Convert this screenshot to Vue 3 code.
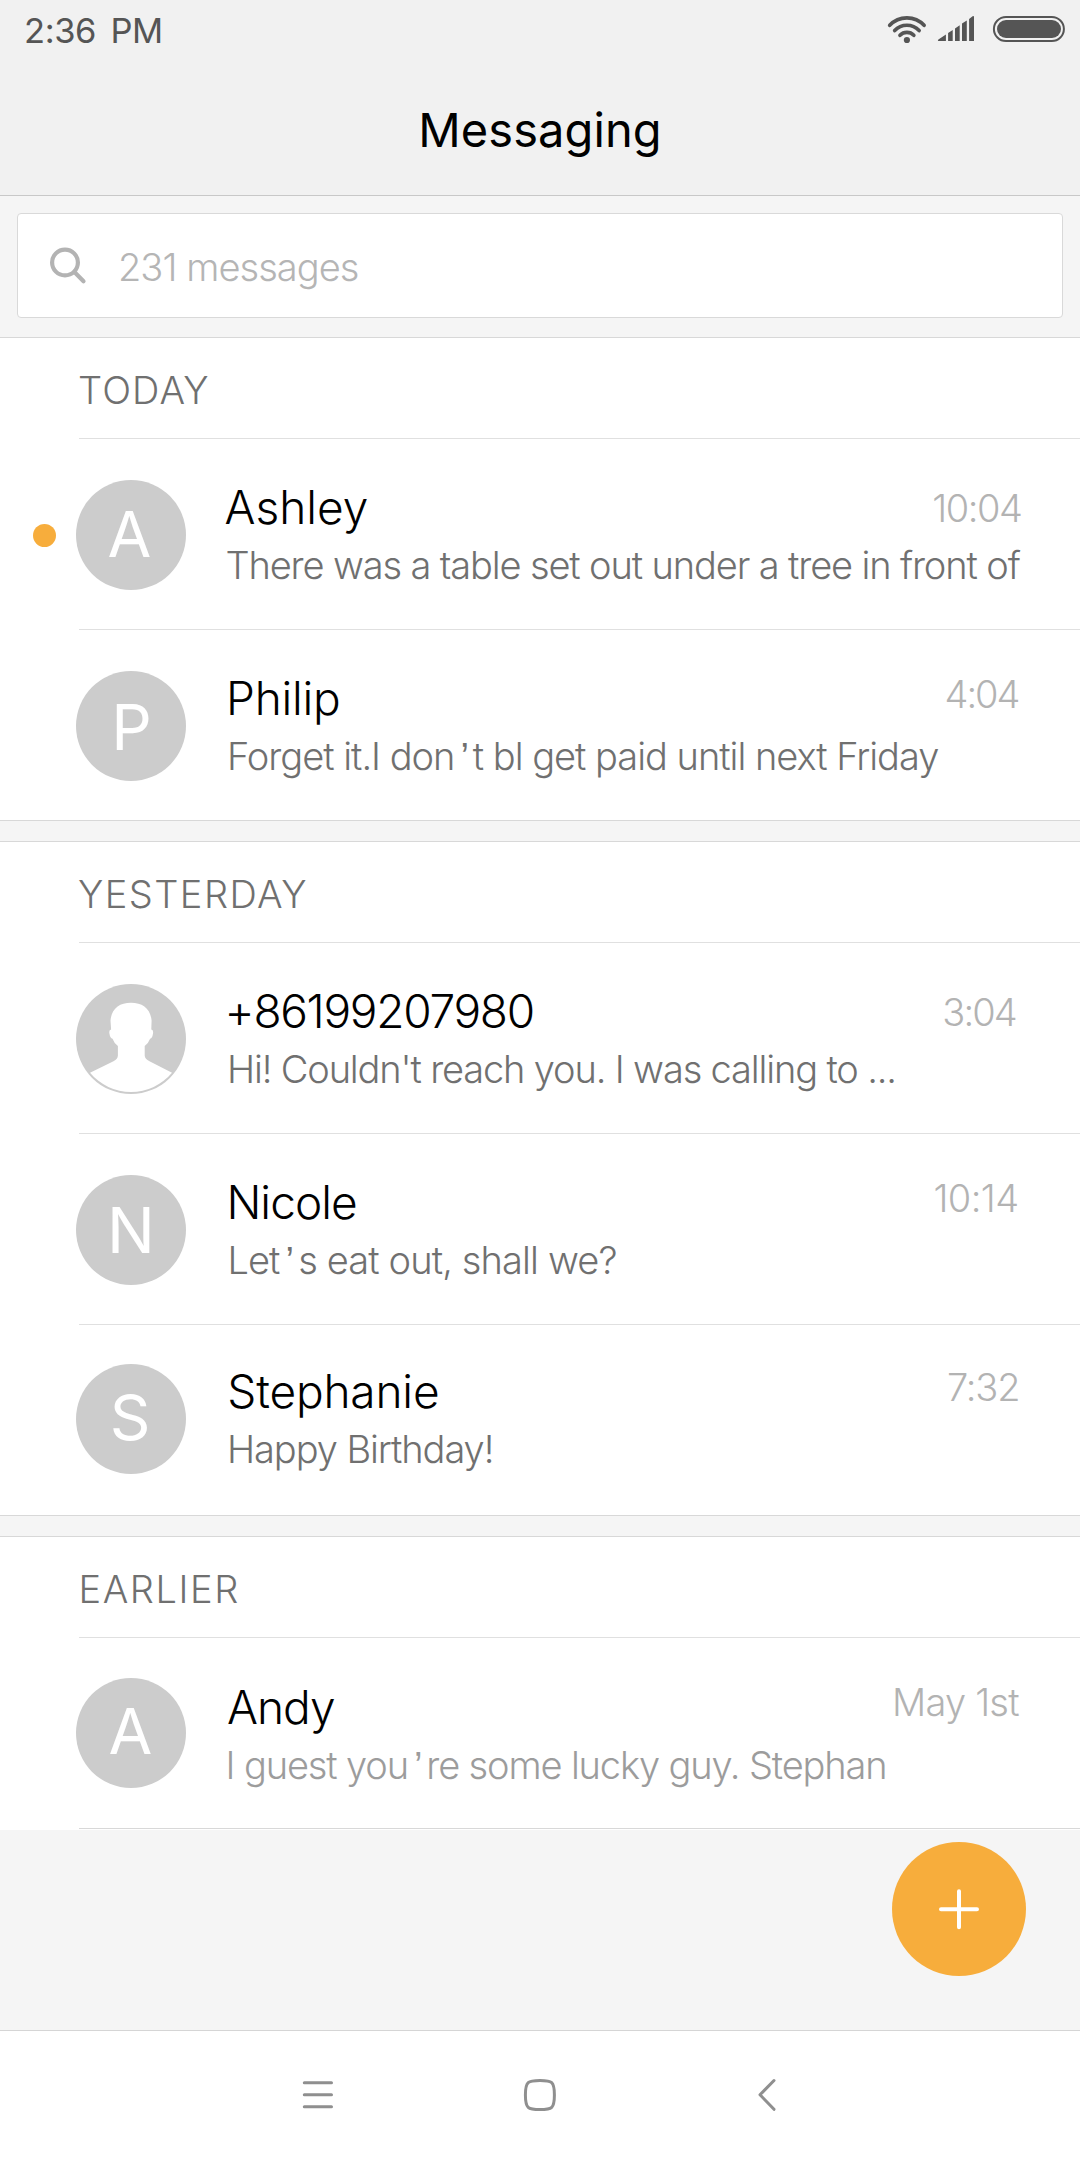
<script setup>
// Optical adjustments (tracking and nudges, in px) sit beside each string.
const sections = [
  {
    label: 'TODAY', track: 1.1, indent: 78,
    threads: [
      { initial: 'A', ix: -1.5, iy: -1, name: 'Ashley', nt: 0, nx: -1.5, text: 'There was a table set out under a tree in front of', tt: -1.13, tx: -0.6, time: '10:04', mt: -1.45, mx: 1021.4, my: 84, unread: true },
      { initial: 'P', ix: 0.5, iy: 1, name: 'Philip', nt: -0.24, nx: 0, text: 'Forget it.I don’t bl get paid until next Friday', tt: -1.02, tx: 1, time: '4:04', mt: -2, mx: 1019, my: 79 },
    ],
  },
  {
    label: 'YESTERDAY', track: 1.44, indent: 78,
    threads: [
      { name: '+86199207980', nt: -1.28, nx: -1.4, text: "Hi! Couldn't reach you. I was calling to ...", tt: -1.155, tx: 1, time: '3:04', mt: -1.9, mx: 1016.2, my: 84 },
      { initial: 'N', ix: 0, iy: 0, name: 'Nicole', nt: -0.96, nx: 0.4, text: 'Let’s eat out, shall we?', tt: -0.87, tx: 1.4, time: '10:14', mt: -0.6, mx: 1017.6, my: 79 },
      { initial: 'S', ix: -1, iy: -2, lift: -2, name: 'Stephanie', nt: -0.16, nx: 1.3, text: 'Happy Birthday!', tt: -1.07, tx: 1, time: '7:32', mt: -1.2, mx: 1019, my: 77 },
    ],
  },
  {
    label: 'EARLIER', track: 1.57, indent: 78.5,
    threads: [
      { initial: 'A', ix: -0.6, iy: -2, lift: -1, name: 'Andy', nt: -0.97, nx: 1, ny: 1, text: 'I guest you’re some lucky guy. Stephan', tt: -1.14, tx: -0.4, time: 'May 1st', mt: -0.8, mx: 1018, my: 79, faded: true },
    ],
  },
]
const px = (n) => `${n}px`
</script>

<template>
  <div class="screen">
    <header class="header">
      <div class="status">
        <span class="clock">2:36 PM</span>
        <svg class="status-icons" width="180" height="30" viewBox="886 14 180 30">
          <g fill="none" stroke="#555" stroke-width="3.7" stroke-linecap="round">
            <path d="M889.7 25.3A23.5 23.5 0 0 1 924.1 25.3" />
            <path d="M894.7 30.6A16.6 16.6 0 0 1 919.1 30.6" />
            <path d="M900 35.3A9.6 9.6 0 0 1 913.8 35.3" />
          </g>
          <circle cx="906.9" cy="40" r="3.1" fill="#555" />
          <path fill="#555" d="M938.4 41q-1.2-.6 0-1.6L945.9 34.6V41zM948.1 33.1L952.7 30V41h-4.6zM955 28.4L959.7 25.2V41H955zM962 23.6L966.8 20.4V41H962zM969.1 18.9L972.6 16.3Q974 15.6 974 17V41h-4.9z" />
          <rect x="993.9" y="16.9" width="70" height="24.2" rx="12.1" fill="none" stroke="#555" stroke-width="2" />
          <rect x="997" y="20" width="64" height="18" rx="9" fill="#555" />
        </svg>
      </div>
      <h1 class="title">Messaging</h1>
    </header>

    <div class="search-wrap">
      <div class="search">
        <svg class="search-icon" width="40" height="40" viewBox="0 0 40 40" fill="none" stroke="#b3b3b3" stroke-width="4.2" stroke-linecap="round">
          <circle cx="17" cy="17.5" r="12.9" />
          <path d="M26.4 27.1L35.5 36.2" />
        </svg>
        <span class="search-text">231 messages</span>
      </div>
    </div>

    <section v-for="s in sections" :key="s.label" class="section">
      <h2 class="label" :style="{ letterSpacing: px(s.track), paddingLeft: px(s.indent) }">{{ s.label }}</h2>
      <article v-for="t in s.threads" :key="t.name" class="thread" :class="{ faded: t.faded }">
        <div class="lead" :style="{ marginTop: px(41 + (t.lift || 0)) }">
          <i v-if="t.unread" class="dot"></i>
          <div v-if="t.initial" class="avatar"><span :style="{ transform: `translate(${t.ix}px, ${t.iy}px)` }">{{ t.initial }}</span></div>
          <svg v-else class="person" width="110" height="110" viewBox="0 0 110 110">
            <circle cx="55" cy="55" r="55" fill="#ccc" />
            <path fill="#fff" d="M55 18.7C66.500 18.700 74.500 24.500 75.600 36.500L75.300 45.400Q77.600 45.400 77 49.500Q76.300 54.500 74.100 54.800Q72.400 59.500 68.700 62V71.500Q68.900 75 73.500 77.200L96 88.700A53.2 53.2 0 0 1 14 88.700L37.500 77.200Q41.800 75 41.900 71.500V62Q38.200 59.500 36.500 54.800Q34.200 54.500 33.400 49.500Q32.800 45.400 35.100 45.400L34.500 36.500C35.500 24.500 43.500 18.700 55 18.700Z" />
          </svg>
        </div>
        <div class="body" :style="{ paddingTop: px(40 + (t.ny ?? t.lift ?? 0)) }">
          <h3 class="name" :style="{ letterSpacing: px(t.nt), marginLeft: px(t.nx) }">{{ t.name }}</h3>
          <p class="preview" :style="{ letterSpacing: px(t.tt), marginLeft: px(t.tx) }"><template v-for="(part, i) in t.text.split('’')" :key="i"><span v-if="i" class="apos">’</span>{{ part }}</template></p>
        </div>
        <time class="time" :style="{ letterSpacing: px(t.mt), marginTop: px(t.my - 38.8), marginRight: px(1078.5 - t.mx - t.mt) }">{{ t.time }}</time>
      </article>
    </section>

    <main class="rest">
      <button class="fab" aria-label="New message">
        <svg width="134" height="134" viewBox="0 0 134 134" stroke="#fff" stroke-width="4" stroke-linecap="round"><path d="M49 67.200H85M67 49.200V85.200" /></svg>
      </button>
    </main>

    <nav class="nav">
      <svg width="1080" height="129" viewBox="0 2031 1080 129" fill="none" stroke="#8f8f8f" stroke-width="3" stroke-linecap="round" stroke-linejoin="round">
        <path d="M304.300 2082.700H331.500M304.300 2094.700H331.500M304.300 2106.700H331.500" />
        <path d="M540 2080.500C552 2080.500 554.400 2081.500 554.400 2095C554.400 2108.500 552 2109.500 540 2109.500C528 2109.500 525.400 2108.500 525.400 2095C525.400 2081.500 528 2080.500 540 2080.500Z" />
        <path d="M774 2080.500L760 2094.800L774 2109.300" />
      </svg>
    </nav>
  </div>
</template>

<style>
body { margin: 0; }
</style>

<style scoped>
.screen {
  width: 1080px;
  height: 2160px;
  overflow: hidden;
  display: flex;
  flex-direction: column;
  background: #f5f5f5;
  color: #000;
  font-family: Inter, "Liberation Sans", sans-serif;
  font-weight: 300;
  font-feature-settings: "calt" 0;
}
h1, h2, h3, p { margin: 0; font-weight: inherit; }
.header {
  box-sizing: border-box;
  height: 196px;
  flex: none;
  background: #f1f1f1;
  border-bottom: 1px solid #c8c8c8;
}
.status {
  height: 102px;
  display: flex;
  justify-content: space-between;
  align-items: flex-start;
  padding: 0 14px 0 24px;
}
.clock {
  margin-top: 11px;
  font-size: 34.5px;
  line-height: 40px;
  font-weight: 400;
  letter-spacing: -0.4px;
  word-spacing: 5px;
  color: #555;
}
.status-icons { margin-top: 14px; }
.title {
  font-size: 47px;
  line-height: 56px;
  font-weight: 400;
  letter-spacing: 0.1px;
  text-align: center;
}
.search-wrap { height: 141px; flex: none; box-sizing: border-box; padding: 17px 17px 0; }
.search {
  box-sizing: border-box;
  height: 105px;
  display: flex;
  background: #fff;
  border: 1px solid #d9d9d9;
  border-radius: 4px;
}
.search-icon { margin: 31px 0 0 30px; }
.search-text {
  margin: 29px 0 0 30px;
  font-size: 38px;
  line-height: 48px;
  letter-spacing: -0.95px;
  color: #b5b5b5;
}
.section {
  flex: none;
  background: #fff;
  border-top: 1px solid #d8d8d8;
  border-bottom: 1px solid #d8d8d8;
  margin-bottom: 20px;
}
.section:last-of-type { border-bottom: 0; padding-bottom: 2px; margin-bottom: 0; }
.label {
  box-sizing: border-box;
  height: 100px;
  padding-top: 27.5px;
  font-size: 38px;
  line-height: 48px;
  color: #707070;
}
.thread {
  position: relative;
  display: flex;
  height: 190px;
  padding-top: 1px;
}
.thread::before,
.section:last-of-type .thread:last-child::after {
  content: "";
  position: absolute;
  left: 79px;
  right: 0;
  top: 0;
  height: 1px;
  background: #e0e0e0;
}
.section:last-of-type .thread:last-child::after { top: auto; bottom: -1px; background: #d8d8d8; }
.lead { position: relative; flex: none; width: 150px; padding-left: 76px; }
.dot {
  position: absolute;
  left: 33px;
  top: 44px;
  width: 23px;
  height: 23px;
  border-radius: 50%;
  background: #f7ad3c;
}
.avatar {
  width: 110px;
  height: 110px;
  border-radius: 50%;
  background: #ccc;
  color: #fff;
  font-size: 63.5px;
  font-weight: 400;
  line-height: 110px;
  text-align: center;
}
.avatar span { display: block; }
.person { display: block; }
.body { flex: 1; min-width: 0; white-space: nowrap; }
.name { font-size: 46px; line-height: 56px; }
.preview { margin-top: 6px; font-size: 38px; line-height: 48px; color: #707070; }
.faded .preview { color: #9c9c9c; }
.apos { margin: 0 5px 0 6px; font-family: "Liberation Sans", sans-serif; line-height: 1; }
.time {
  flex: none;
  width: 0;
  display: flex;
  justify-content: flex-end;
  white-space: nowrap;
  font-size: 38px;
  line-height: 48px;
  color: #b3b3b3;
}
.rest { flex: 1; }
.fab {
  display: block;
  width: 134px;
  height: 134px;
  margin: 12px 54px 0 auto;
  padding: 0;
  border: 0;
  border-radius: 50%;
  background: #f7ad3c;
}
.fab svg { display: block; }
.nav { flex: none; height: 129px; border-top: 1px solid #d5d5d5; background: #fff; }
.nav svg { display: block; }
</style>
